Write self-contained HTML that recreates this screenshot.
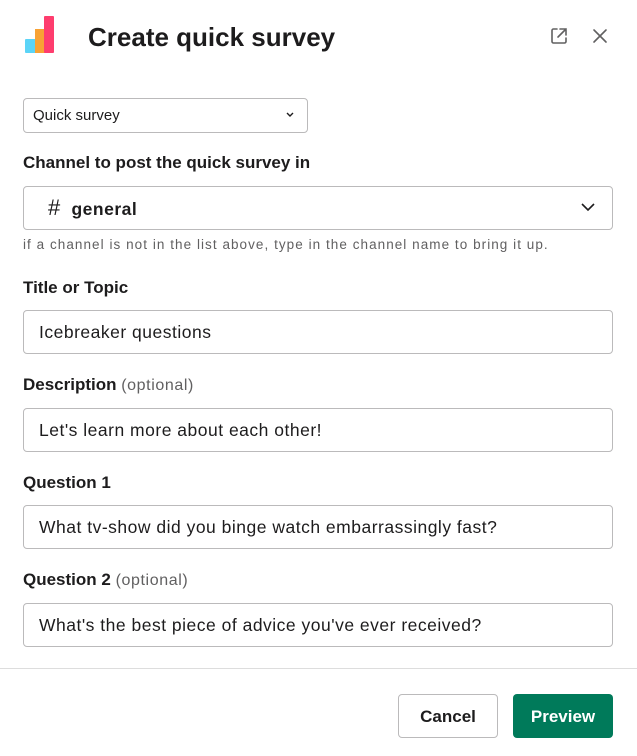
<!DOCTYPE html>
<html><head><style>
*{box-sizing:border-box;margin:0;padding:0}
body{width:637px;height:756px;background:#fff;font-family:"Liberation Sans",sans-serif;color:#1d1c1d;position:relative;overflow:hidden}
.a{position:absolute}
.lbl{position:absolute;left:23px;font-weight:bold;font-size:17px;line-height:20px}
.lbl span{font-weight:normal;color:#616061;font-size:16px;letter-spacing:0.6px}
.inp{position:absolute;left:23px;width:590px;height:44px;border:1px solid #bbbabb;border-radius:4px;font-size:17.5px;letter-spacing:0.5px;line-height:42px;padding-left:15px}
.btn{position:absolute;top:694px;height:44px;border-radius:4px;font-weight:bold;font-size:17px;line-height:46px;text-align:center}
</style></head><body>
<div class="a" style="left:25px;top:39px;width:11px;height:14px;background:#5bd4f7;border-radius:1px 0 0 1px"></div>
<div class="a" style="left:35px;top:29px;width:10px;height:24px;background:#f8a234"></div>
<div class="a" style="left:44px;top:16px;width:10px;height:37px;background:#fe3d6e;border-radius:1px"></div>
<div class="a" style="left:88px;top:20px;font-size:26px;font-weight:bold;line-height:34px">Create quick survey</div>
<svg class="a" style="left:549px;top:26px" width="20" height="20" viewBox="0 0 20 20" fill="none" stroke="#616061" stroke-width="1.6" stroke-linecap="round"><path d="M8 3H4.5A1.5 1.5 0 0 0 3 4.5v11A1.5 1.5 0 0 0 4.5 17h11a1.5 1.5 0 0 0 1.5-1.5V12"/><path d="M11 3h6v6M17 3l-8 8"/></svg>
<svg class="a" style="left:592px;top:28px" width="16" height="16" viewBox="0 0 16 16" stroke="#616061" stroke-width="1.6" stroke-linecap="round"><path d="M2 2l12 12M14 2L2 14"/></svg>
<div class="a" style="left:23px;top:98px;width:285px;height:35px;border:1px solid #bbbabb;border-radius:4px;font-size:15px;line-height:33px;padding-left:9px">Quick survey</div>
<svg class="a" style="left:285px;top:111px" width="10" height="8" viewBox="0 0 10 8" fill="none" stroke="#1d1c1d" stroke-width="1.4"><path d="M2 2l3 3 3-3"/></svg>
<div class="lbl" style="top:153px">Channel to post the quick survey in</div>
<div class="inp" style="top:186px;padding-left:24px"><span style="font-size:22px;font-weight:normal">#</span>&nbsp;&nbsp;<b>general</b></div>
<svg class="a" style="left:580px;top:201px" width="16" height="12" viewBox="0 0 16 12" fill="none" stroke="#1d1c1d" stroke-width="1.6"><path d="M2 3l6 6 6-6"/></svg>
<div class="a" style="left:23px;top:237px;font-size:13.5px;letter-spacing:1.05px;color:#616061">if a channel is not in the list above, type in the channel name to bring it up.</div>
<div class="lbl" style="top:278px">Title or Topic</div>
<div class="inp" style="top:310px">Icebreaker questions</div>
<div class="lbl" style="top:375px">Description <span>(optional)</span></div>
<div class="inp" style="top:408px">Let's learn more about each other!</div>
<div class="lbl" style="top:473px">Question 1</div>
<div class="inp" style="top:505px">What tv-show did you binge watch embarrassingly fast?</div>
<div class="lbl" style="top:570px">Question 2 <span>(optional)</span></div>
<div class="inp" style="top:603px">What's the best piece of advice you've ever received?</div>
<div class="a" style="left:0;top:668px;width:637px;height:1px;background:#dddddd"></div>
<div class="btn" style="left:398px;width:100px;border:1px solid #bbbabb;line-height:44px">Cancel</div>
<div class="btn" style="left:513px;width:100px;background:#007a5a;color:#fff">Preview</div>
</body></html>
